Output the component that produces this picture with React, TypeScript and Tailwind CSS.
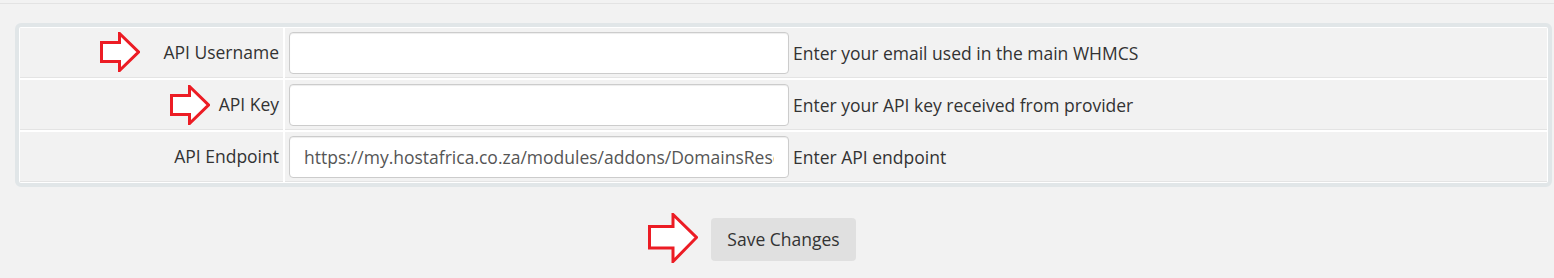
import React from 'react';

interface FieldRowProps {
  label: string;
  hint: string;
  value?: string;
}

const RedArrow: React.FC<{ size: 'sm' | 'lg'; className: string }> = ({ size, className }) => {
  if (size === 'lg') {
    return (
      <svg className={className} width="50" height="50" viewBox="0 0 50 50">
        <path
          d="M1.5 13.5 H25 V1.5 L48.5 24.5 L25 48.5 V35 H1.5 Z"
          fill="#ffffff"
          stroke="#ec1c24"
          strokeWidth="3"
          strokeLinejoin="miter"
        />
      </svg>
    );
  }
  return (
    <svg className={className} width="40" height="40" viewBox="0 0 40 40">
      <path
        d="M1.5 10.5 H19.5 V1.5 L38.5 20 L19.5 38.5 V29.5 H1.5 Z"
        fill="#ffffff"
        stroke="#ec1c24"
        strokeWidth="3"
        strokeLinejoin="miter"
      />
    </svg>
  );
};

const FieldRow: React.FC<FieldRowProps> = ({ label, hint, value }) => {
  return (
    <div className="flex gap-[2px]">
      <div className="w-[263px] shrink-0 bg-[#f2f2f2] border-b border-[#e4e4e4] flex items-center justify-end pr-1 h-[50px]">
        <span className="text-[#333333]">{label}</span>
      </div>
      <div className="flex-1 bg-[#f2f2f2] border-b border-[#e4e4e4] flex items-center h-[50px] pl-1 pt-px">
        <input
          type="text"
          readOnly
          defaultValue={value ?? ''}
          className="w-[500px] h-[42px] bg-white border border-[#cccccc] rounded-[4px] pl-[14px] pr-[14px] text-[#555555] shadow-[inset_0_1px_1px_rgba(0,0,0,0.075)] outline-none"
        />
        <span className="ml-1 text-[#333333]">{hint}</span>
      </div>
    </div>
  );
};

export default function App() {
  return (
    <div className="relative w-[1554px] h-[278px] bg-[#f2f2f2] font-['Open_Sans',sans-serif] text-[17.5px] overflow-hidden">
      <div className="h-[3px]" />
      <div className="border-t border-[#e3e3e3]" />

      <div className="ml-[15px] mr-[2px] mt-[19px] border-4 border-[#e1e6e8] rounded-[6px] bg-white p-px flex flex-col gap-[2px]">
        <FieldRow label="API Username" hint="Enter your email used in the main WHMCS" />
        <FieldRow label="API Key" hint="Enter your API key received from provider" />
        <FieldRow
          label="API Endpoint"
          hint="Enter API endpoint"
          value="https://my.hostafrica.co.za/modules/addons/DomainsReseller/api/index.php/"
        />
      </div>

      <div className="ml-[15px] mr-[2px] mt-[31px] flex justify-center">
        <button className="w-[145px] h-[43px] bg-[#e0e0e0] rounded-[4px] text-[#333333]">
          Save Changes
        </button>
      </div>

      <RedArrow size="sm" className="absolute left-[100px] top-[32px]" />
      <RedArrow size="sm" className="absolute left-[170px] top-[85px]" />
      <RedArrow size="lg" className="absolute left-[648px] top-[213px]" />
    </div>
  );
}
